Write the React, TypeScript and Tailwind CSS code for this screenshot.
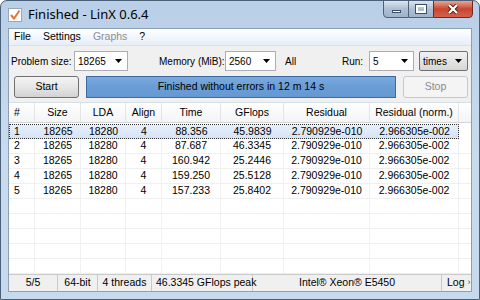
import React from "react";

const rows = [
  ["1", "18265", "18280", "4", "88.356", "45.9839", "2.790929e-010", "2.966305e-002"],
  ["2", "18265", "18280", "4", "87.687", "46.3345", "2.790929e-010", "2.966305e-002"],
  ["3", "18265", "18280", "4", "160.942", "25.2446", "2.790929e-010", "2.966305e-002"],
  ["4", "18265", "18280", "4", "159.250", "25.5128", "2.790929e-010", "2.966305e-002"],
  ["5", "18265", "18280", "4", "157.233", "25.8402", "2.790929e-010", "2.966305e-002"],
];

const headers = ["#", "Size", "LDA", "Align", "Time", "GFlops", "Residual", "Residual (norm.)"];
const widths = ["w-[26px]", "w-[46px]", "w-[45px]", "w-[36px]", "w-[59px]", "w-[63px]", "w-[86px]", "w-[89px]"];

function Arrow() {
  return (
    <svg width="7" height="4" viewBox="0 0 7 4" className="shrink-0">
      <path d="M0 0 H7 L3.5 4 Z" fill="#000" />
    </svg>
  );
}

function Combo({ value, w }: { value: string; w: string }) {
  return (
    <div className={`${w} shrink-0 h-[20px] bg-white border border-[#abadb3] flex items-center pl-[3px] pr-[5px] justify-between`}>
      <span>{value}</span>
      <Arrow />
    </div>
  );
}

function EmptyRow() {
  return (
    <div className="flex h-[15px] border-b border-[#f0f0f0]">
      {widths.map((w, i) => (
        <div key={i} className={`${w} shrink-0 border-r border-[#f0f0f0]`} />
      ))}
      <div className="flex-1" />
    </div>
  );
}

export default function App() {
  return (
    <div
      className="w-[480px] h-[300px] flex flex-col overflow-hidden rounded-t-[7px] border border-[#4a5f78] bg-gradient-to-b from-[#b9cfe7] via-[#c9dbee] to-[#c6d9ed] whitespace-nowrap"
      style={{ fontFamily: '"Liberation Sans", Arial, sans-serif', fontSize: 10.5 }}
    >
      {/* title bar */}
      <div className="h-[27px] flex items-start">
        <div className="mt-[7px] ml-[7px] w-[14px] h-[14px] bg-white border border-[#9aa7b5] flex items-center justify-center">
          <svg width="12" height="12" viewBox="0 0 12 12">
            <path d="M2 6 L5 9.5 L10.5 1.5" stroke="#e8743b" strokeWidth="2" fill="none" />
          </svg>
        </div>
        <div className="ml-[6px] mt-[4px] text-[13px] text-black" style={{ fontFamily: '"Noto Sans", "Open Sans", sans-serif' }}>
          Finished - LinX 0.6.4
        </div>
        <div className="flex-1" />
        <div className="flex mr-[6px] -mt-px">
          <div className="w-[26px] h-[18px] border border-[#4d6179] rounded-bl-[4px] bg-gradient-to-b from-[#dbe5ef] via-[#aebfd2] to-[#9fb3ca] flex items-end justify-center pb-[4px]">
            <div className="w-[9px] h-[3px] bg-white border border-[#3b4f66]" />
          </div>
          <div className="w-[24px] h-[18px] border-y border-[#4d6179] bg-gradient-to-b from-[#dbe5ef] via-[#aebfd2] to-[#9fb3ca] flex items-center justify-center">
            <div className="w-[10px] h-[8px] border-2 border-white outline outline-1 outline-[#3b4f66]" />
          </div>
          <div className="w-[40px] h-[18px] border border-[#6b2a22] rounded-br-[4px] bg-gradient-to-b from-[#e8a493] via-[#c7452f] to-[#d2624b] flex items-center justify-center">
            <svg width="12" height="10" viewBox="0 0 12 10">
              <path d="M2 1 L10 9 M10 1 L2 9" stroke="#3a1a14" strokeWidth="4" />
              <path d="M2 1 L10 9 M10 1 L2 9" stroke="#fff" strokeWidth="2.4" />
            </svg>
          </div>
        </div>
      </div>

      {/* client */}
      <div className="flex-1 flex px-[7px] pb-[7px]">
        <div className="flex-1 flex flex-col bg-[#f0f0f0] border border-[#8d9fb4] text-black">
          {/* menu */}
          <div className="h-[17px] flex items-center gap-[12px] pl-[5px] bg-gradient-to-b from-[#ffffff] to-[#e6eef8] border-b border-[#d9e2ec] text-[10.5px]">
            <span>File</span>
            <span>Settings</span>
            <span className="text-[#8d8d8d]">Graphs</span>
            <span>?</span>
          </div>

          {/* row 1 */}
          <div className="h-[24px] mt-[3px] flex items-center pl-[2px] text-[10px]">
            <span className="w-[63px] shrink-0">Problem size:</span>
            <Combo value="18265" w="w-[54px]" />
            <span className="ml-[31px] w-[66px] shrink-0">Memory (MiB):</span>
            <Combo value="2560" w="w-[51px]" />
            <span className="ml-[9px]">All</span>
            <div className="flex-1" />
            <span className="w-[27px] shrink-0">Run:</span>
            <Combo value="5" w="w-[45px]" />
            <div className="ml-[5px] mr-[3px] w-[49px] h-[20px] rounded-[2px] border border-[#707070] bg-gradient-to-b from-[#f2f2f2] to-[#d6d6d6] flex items-center justify-between pl-[3px] pr-[5px]">
              <span>times</span>
              <Arrow />
            </div>
          </div>

          {/* row 2 */}
          <div className="h-[23px] mt-[2px] flex items-center pl-[5px] pr-[3px]">
            <div className="w-[65px] shrink-0 h-[22px] rounded-[3px] border border-[#707070] bg-gradient-to-b from-[#f4f4f4] via-[#e6e6e6] to-[#d2d2d2] flex items-center justify-center">
              Start
            </div>
            <div className="ml-[7px] flex-1 h-[22px] border border-[#3d6a9e] bg-gradient-to-b from-[#7aa9de] via-[#6a9dd6] to-[#6699d2] flex items-center justify-center">
              Finished without errors in 12 m 14 s
            </div>
            <div className="ml-[7px] w-[65px] shrink-0 h-[22px] rounded-[3px] border border-[#c5c9cd] bg-[#f4f4f4] text-[#8a8a8a] flex items-center justify-center">
              Stop
            </div>
          </div>

          {/* table */}
          <div className="mt-[4px] flex-1 flex flex-col bg-white border-t border-[#d5dfe5] overflow-hidden">
            <div className="flex h-[20px] bg-gradient-to-b from-[#ffffff] to-[#f3f4f6] border-b border-[#d5d5d5]">
              {headers.map((h, i) => (
                <div
                  key={h}
                  className={`${widths[i]} shrink-0 border-r border-[#e3e5e8] flex items-center ${i === 0 ? "pl-[5px]" : "justify-center"}`}
                >
                  {h}
                </div>
              ))}
              <div className="flex-1" />
            </div>
            <div className="mt-[1px]">
              {rows.map((r, ri) => (
                <div
                  key={ri}
                  className={`flex h-[15px] ${
                    ri === 0
                      ? "bg-gradient-to-b from-[#e8f0fb] to-[#d4e3f6] outline-1 outline-dotted outline-[#333] -outline-offset-1 w-[450px]"
                      : "border-b border-[#f0f0f0]"
                  }`}
                >
                  {r.map((c, i) => (
                    <div
                      key={i}
                      className={`${widths[i]} shrink-0 ${ri === 0 ? "" : "border-r border-[#f0f0f0]"} flex items-center ${i === 0 ? "pl-[5px]" : "justify-center"}`}
                    >
                      {c}
                    </div>
                  ))}
                  {ri === 0 ? null : <div className="flex-1" />}
                </div>
              ))}
              <EmptyRow />
              <EmptyRow />
              <EmptyRow />
              <EmptyRow />
              <EmptyRow />
            </div>
          </div>

          {/* status bar */}
          <div className="h-[17px] flex items-center bg-[#f0f0f0] border-t border-[#c9c9c9]">
            <div className="w-[49px] shrink-0 h-full border-r border-[#c9c9c9] flex items-center justify-center">5/5</div>
            <div className="w-[40px] shrink-0 h-full border-r border-[#c9c9c9] flex items-center justify-center">64-bit</div>
            <div className="w-[54px] shrink-0 h-full border-r border-[#c9c9c9] flex items-center justify-center">4 threads</div>
            <div className="w-[101px] shrink-0 h-full border-r border-[#c9c9c9] flex items-center pl-[4px]">46.3345 GFlops peak</div>
            <div className="flex-1 h-full flex items-center justify-center">Intel® Xeon® E5450</div>
            <div className="w-[30px] shrink-0 h-full border-l border-[#c9c9c9] flex items-center pl-[5px] gap-[3px]">
              Log <span className="text-[9px] text-[#555]">›</span>
            </div>
          </div>
        </div>
      </div>
    </div>
  );
}
